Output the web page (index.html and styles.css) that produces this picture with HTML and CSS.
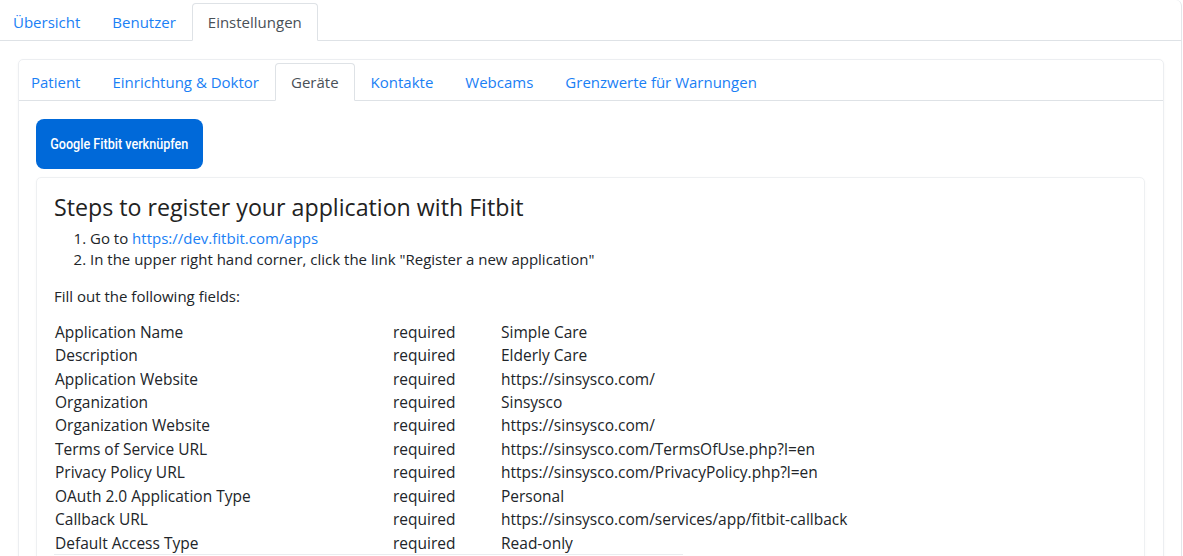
FILE: index.html
```html
<!DOCTYPE html>
<html lang="de">
<head>
    <meta charset="UTF-8">
    <meta name="viewport" content="width=device-width, initial-scale=1.0">
    <title>Einstellungen</title>
    <link rel="stylesheet" href="styles.css">
</head>
<body>
    <div class="top-tabs">
        <a class="tab" href="#">Übersicht</a>
        <a class="tab" href="#">Benutzer</a>
        <a class="tab active" href="#">Einstellungen</a>
    </div>

    <div class="panel">
        <div class="card">
            <div class="sub-tabs">
                <a class="tab" href="#">Patient</a>
                <a class="tab" href="#">Einrichtung &amp; Doktor</a>
                <a class="tab active" href="#">Geräte</a>
                <a class="tab" href="#">Kontakte</a>
                <a class="tab" href="#">Webcams</a>
                <a class="tab" href="#">Grenzwerte für Warnungen</a>
            </div>

            <div class="card-body">
                <button class="fitbit-btn"><span>Google Fitbit verknüpfen</span></button>

                <div class="info-card">
                    <h2>Steps to register your application with Fitbit</h2>
                    <ol class="steps">
                        <li>Go to <a href="#">https://dev.fitbit.com/apps</a></li>
                        <li>In the upper right hand corner, click the link "Register a new application"</li>
                    </ol>

                    <p class="hint">Fill out the following fields:</p>

                    <table class="fields">
                        <tr><td>Application Name</td><td>required</td><td>Simple Care</td></tr>
                        <tr><td>Description</td><td>required</td><td>Elderly Care</td></tr>
                        <tr><td>Application Website</td><td>required</td><td>https://sinsysco.com/</td></tr>
                        <tr><td>Organization</td><td>required</td><td>Sinsysco</td></tr>
                        <tr><td>Organization Website</td><td>required</td><td>https://sinsysco.com/</td></tr>
                        <tr><td>Terms of Service URL</td><td>required</td><td>https://sinsysco.com/TermsOfUse.php?l=en</td></tr>
                        <tr><td>Privacy Policy URL</td><td>required</td><td>https://sinsysco.com/PrivacyPolicy.php?l=en</td></tr>
                        <tr><td>OAuth 2.0 Application Type</td><td>required</td><td>Personal</td></tr>
                        <tr><td>Callback URL</td><td>required</td><td>https://sinsysco.com/services/app/fitbit-callback</td></tr>
                        <tr><td>Default Access Type</td><td>required</td><td>Read-only</td></tr>
                    </table>
                    <div class="divider"></div>
                </div>
            </div>
        </div>
    </div>
</body>
</html>
```

FILE: styles.css
```css
* {
    margin: 0;
    padding: 0;
    box-sizing: border-box;
}

body {
    font-family: 'Open Sans', 'Noto Sans', sans-serif;
    color: #212529;
    background: #fff;
    overflow: hidden;
}

a {
    color: #1a80f5;
    text-decoration: none;
}

/* Tabs */
.top-tabs,
.sub-tabs {
    display: flex;
    align-items: flex-end;
    border-bottom: 1px solid #dee2e6;
}

.top-tabs {
    height: 41px;
    width: 1182px;
    border-right: 1px solid #e4e6ea;
    border-top-right-radius: 6px;
}

.sub-tabs {
    height: 41px;
}

.tab {
    display: block;
    padding: 8px 15px;
    font-size: 15px;
    line-height: 20px;
    border: 1px solid transparent;
    border-top-left-radius: 4px;
    border-top-right-radius: 4px;
    margin-bottom: -1px;
}

.top-tabs .tab:first-child {
    margin-left: -3px;
}

.sub-tabs .tab:first-child {
    margin-left: -4px;
}

.tab.active {
    color: #495057;
    border-color: #dee2e6 #dee2e6 #fff;
    background: #fff;
}

/* Panel */
.panel {
    width: 1182px;
    height: 520px;
    border-right: 1px solid #e4e6ea;
    padding: 18px 17px 0 18px;
}

.card {
    border: 1px solid #eceef1;
    border-radius: 5px;
    box-shadow: 0 1px 3px rgba(0,0,0,0.04);
    height: 520px;
}

.card-body {
    padding: 18px 18px 0 17px;
}

.fitbit-btn {
    display: flex;
    align-items: center;
    justify-content: center;
    width: 167px;
    height: 50px;
    background: #0069d9;
    color: #fff;
    border: none;
    border-radius: 8px;
    font-family: 'Roboto', sans-serif;
    font-weight: 500;
    font-size: 15px;
    cursor: pointer;
}

.fitbit-btn span {
    display: inline-block;
    white-space: nowrap;
    transform: scaleX(0.84);
}

.info-card {
    margin-top: 8px;
    border: 1px solid #eef0f2;
    border-radius: 5px;
    box-shadow: 0 1px 3px rgba(0,0,0,0.03);
    padding: 15px 17px 0;
    height: 400px;
}

h2 {
    font-size: 23.2px;
    font-weight: 500;
    line-height: 28px;
    color: #222;
    margin-bottom: 7px;
}

.steps {
    padding-left: 36px;
    font-size: 15px;
    line-height: 21px;
}

.hint {
    margin-top: 16px;
    font-size: 15px;
    line-height: 21px;
}

.fields {
    margin-top: 13px;
    border-collapse: collapse;
    font-size: 15.5px;
}

.fields td {
    height: 23.44px;
    padding: 0 1px;
    white-space: nowrap;
}

.fields td:nth-child(1) { width: 338px; }
.fields td:nth-child(2) { width: 108px; }

.divider {
    width: 629px;
    border-top: 1px solid #e9ecef;
}
```
